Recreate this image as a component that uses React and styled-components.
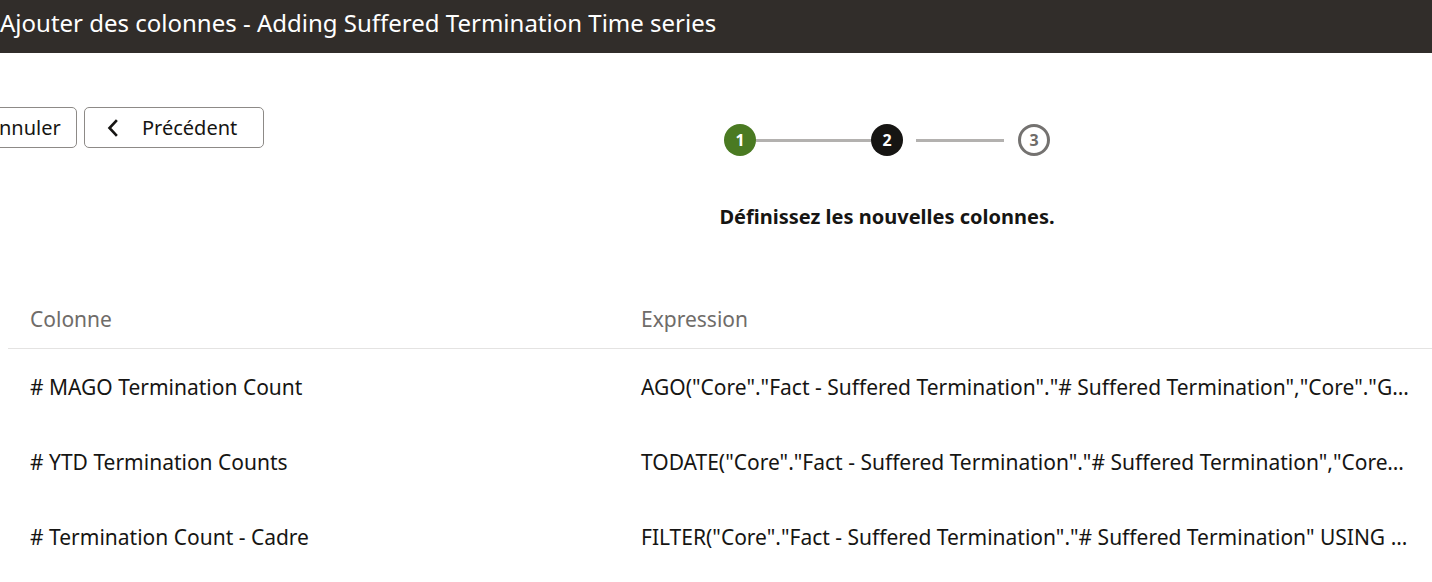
import React from 'react'
import styled, { createGlobalStyle } from 'styled-components'

const GlobalStyle = createGlobalStyle`
  html, body {
    margin: 0;
    padding: 0;
    background: #fff;
    font-family: "Noto Sans", "Open Sans", sans-serif;
    color: #161513;
    overflow: hidden;
  }
`

export const Page = styled.div`
  width: 1432px;
  height: 582px;
  overflow: hidden;
`

export const Header = styled.header`
  height: 53px;
  background: #312d2a;
  color: #fff;
  display: flex;
  align-items: center;
  font-size: 24px;
  white-space: nowrap;
  padding-bottom: 8px;
  box-sizing: border-box;
`

export const Top = styled.section`
  display: grid;
  grid-template-columns: 372px 1fr;
  margin-left: -30px;
  padding-top: 54px;
`

export const Toolbar = styled.div`
  display: flex;
  gap: 7px;
  align-items: flex-start;
`

export const Button = styled.button`
  height: 41px;
  width: ${(p) => p.$width}px;
  border: 1px solid #8d8a87;
  border-radius: 5px;
  background: #fff;
  color: #161513;
  font-family: inherit;
  font-size: 20px;
  display: flex;
  align-items: center;
  justify-content: ${(p) => (p.$icon ? 'flex-start' : 'center')};
  gap: 23px;
  padding: 0 ${(p) => (p.$icon ? 22 : 14)}px;
  box-sizing: border-box;
`

export const Train = styled.div`
  display: flex;
  flex-direction: column;
  align-items: center;
  padding-top: 17px;
`

export const Steps = styled.div`
  display: flex;
  align-items: center;
`

export const Step = styled.div`
  width: 32px;
  height: 32px;
  border-radius: 50%;
  box-sizing: border-box;
  display: flex;
  align-items: center;
  justify-content: center;
  font-size: 16px;
  font-weight: 700;
  background: ${(p) => (p.$state === 'done' ? '#4a7a22' : p.$state === 'current' ? '#161513' : '#fff')};
  color: ${(p) => (p.$state === 'todo' ? '#6f6c69' : '#fff')};
  border: ${(p) => (p.$state === 'todo' ? '3px solid #747270' : 'none')};
`

export const Connector = styled.div`
  height: 3px;
  width: ${(p) => p.$width}px;
  margin: 0 ${(p) => p.$right || 0}px 0 ${(p) => p.$left || 0}px;
  background: #b3b1af;
`

export const Instruction = styled.p`
  margin: 47px 0 0;
  font-size: 20px;
  font-weight: 700;
`

export const Table = styled.div`
  margin: 60px 0 0 8px;
`

export const Row = styled.div`
  display: grid;
  grid-template-columns: 611px 1fr;
  height: ${(p) => (p.$head ? 58 : 75)}px;
  align-items: center;
  border-bottom: ${(p) => (p.$head ? '1px solid #e4e3e2' : 'none')};
  color: ${(p) => (p.$head ? '#6f6c69' : '#161513')};
  font-size: 21px;
`

export const Cell = styled.div`
  padding: 0 22px;
  white-space: nowrap;
  overflow: hidden;
  text-overflow: ellipsis;
`

const Chevron = () => (
  <svg width="12" height="18" viewBox="0 0 12 18" fill="none">
    <path d="M9 2 L2.5 9 L9 16" stroke="#161513" strokeWidth="2.6" strokeLinecap="square" strokeLinejoin="miter" />
  </svg>
)

const rows = [
  ['# MAGO Termination Count', 'AGO("Core"."Fact - Suffered Termination"."# Suffered Termination","Core"."Gregorian Calendar"."Month",1)'],
  ['# YTD Termination Counts', 'TODATE("Core"."Fact - Suffered Termination"."# Suffered Termination","Core"."Gregorian Calendar"."Year")'],
  ['# Termination Count - Cadre', 'FILTER("Core"."Fact - Suffered Termination"."# Suffered Termination" USING "Core"."Worker"."Category" = \'Cadre\')'],
]

export default function App() {
  return (
    <Page>
      <GlobalStyle />
      <Header>Ajouter des colonnes - Adding Suffered Termination Time series</Header>
      <Top>
        <Toolbar>
          <Button $width={107}>Annuler</Button>
          <Button $width={180} $icon>
            <Chevron />
            Précédent
          </Button>
        </Toolbar>
        <Train>
          <Steps>
            <Step $state="done">1</Step>
            <Connector $width={115} />
            <Step $state="current">2</Step>
            <Connector $width={88} $left={13} $right={14} />
            <Step $state="todo">3</Step>
          </Steps>
          <Instruction>Définissez les nouvelles colonnes.</Instruction>
        </Train>
      </Top>
      <Table>
        <Row $head>
          <Cell>Colonne</Cell>
          <Cell>Expression</Cell>
        </Row>
        {rows.map(([name, expr]) => (
          <Row key={name}>
            <Cell>{name}</Cell>
            <Cell>{expr}</Cell>
          </Row>
        ))}
      </Table>
    </Page>
  )
}
